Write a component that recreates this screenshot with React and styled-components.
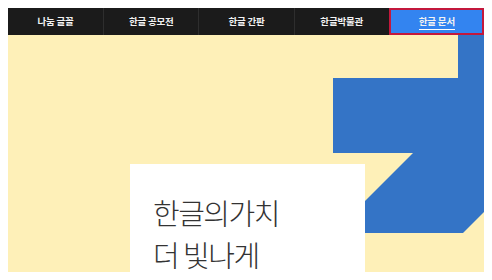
import React from "react";
import styled, { createGlobalStyle } from "styled-components";

const GlobalStyle = createGlobalStyle`
  body {
    margin: 8px;
    background: #fff;
    font-family: "Noto Sans CJK KR", "Noto Sans", sans-serif;
    overflow: hidden;
  }
`;

const Page = styled.div`
  width: 476px;
  display: flex;
  flex-direction: column;
`;

const Nav = styled.nav`
  display: grid;
  grid-template-columns: repeat(5, 1fr);
  height: 27px;
  background: #1b1b1b;
`;

const NavItem = styled.a`
  display: flex;
  align-items: center;
  justify-content: center;
  box-sizing: border-box;
  color: #f2f2f2;
  font-size: 9.5px;
  font-weight: 700;
  letter-spacing: -0.2px;
  text-decoration: none;
  border-left: ${(p) => (p.first ? "none" : "1px solid #2e2e2e")};
  background: ${(p) => (p.active ? "#3384f0" : "transparent")};
  outline: ${(p) => (p.active ? "2px solid #c3183c" : "none")};
  outline-offset: -2px;

  span {
    padding-bottom: 1px;
    border-bottom: ${(p) => (p.active ? "1px solid #fff" : "none")};
  }
`;

const Hero = styled.section`
  position: relative;
  height: 237px;
  background: #fef0b8;
  overflow: hidden;
  padding: 129px 0 0 122px;
  box-sizing: border-box;
`;

const Shape = styled.svg`
  position: absolute;
  left: 0;
  top: 0;
`;

const Card = styled.div`
  position: relative;
  width: 235px;
  height: 200px;
  background: #fff;
  padding: 27px 0 0 23px;
  box-sizing: border-box;
`;

const Title = styled.h1`
  margin: 0;
  font-size: 29px;
  font-weight: 300;
  line-height: 42px;
  letter-spacing: -1.5px;
  color: #333;
`;

const items = ["나눔 글꼴", "한글 공모전", "한글 간판", "한글박물관", "한글 문서"];

export default function App() {
  return (
    <>
      <GlobalStyle />
      <Page>
        <Nav>
          {items.map((label, i) => (
            <NavItem key={label} first={i === 0} active={i === 4}>
              <span>{label}</span>
            </NavItem>
          ))}
        </Nav>
        <Hero>
          <Shape width="476" height="237" viewBox="0 0 476 237">
            <polygon
              fill="#3474c6"
              points="450,0 476,0 476,177 455,198 325,198 405,118 325,118 325,43 450,43"
            />
          </Shape>
          <Card>
            <Title>
              한글의가치
              <br />더 빛나게
            </Title>
          </Card>
        </Hero>
      </Page>
    </>
  );
}
